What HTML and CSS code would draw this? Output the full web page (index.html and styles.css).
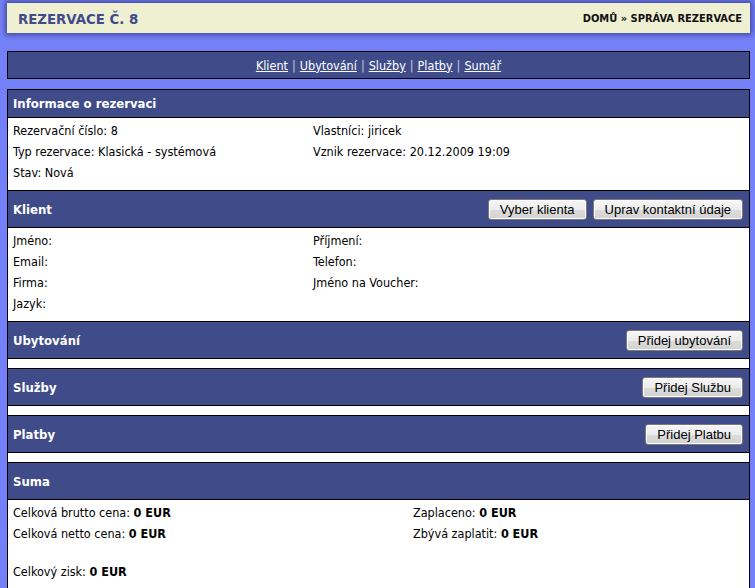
FILE: index.html
```html
<!DOCTYPE html>
<html lang="cs">
<head>
<meta charset="utf-8">
<title>Rezervace č. 8</title>
<link rel="stylesheet" href="styles.css">
</head>
<body>
<div class="page">
  <header class="top">
    <h1 class="top-title">REZERVACE Č. 8</h1>
    <div class="crumbs">DOMŮ » SPRÁVA REZERVACE</div>
  </header>

  <nav class="nav">
    <a href="#">Klient</a><span class="sep">|</span><a href="#">Ubytování</a><span class="sep">|</span><a href="#">Služby</a><span class="sep">|</span><a href="#">Platby</a><span class="sep">|</span><a href="#">Sumář</a>
  </nav>

  <main class="panel">
    <section class="sec">
      <div class="sec-head sec-head--thin">Informace o rezervaci</div>
      <div class="sec-body">
        <div class="grid grid--300">
          <div class="cell">Rezervační číslo: 8</div><div class="cell">Vlastníci: jiricek</div>
          <div class="cell">Typ rezervace: Klasická - systémová</div><div class="cell">Vznik rezervace: 20.12.2009 19:09</div>
          <div class="cell">Stav: Nová</div><div class="cell"></div>
        </div>
      </div>
    </section>

    <section class="sec">
      <div class="sec-head"><span>Klient</span>
        <div class="actions"><button class="btn">Vyber klienta</button><button class="btn">Uprav kontaktní údaje</button></div>
      </div>
      <div class="sec-body">
        <div class="grid grid--300">
          <div class="cell">Jméno:</div><div class="cell">Příjmení:</div>
          <div class="cell">Email:</div><div class="cell">Telefon:</div>
          <div class="cell">Firma:</div><div class="cell">Jméno na Voucher:</div>
          <div class="cell">Jazyk:</div><div class="cell"></div>
        </div>
      </div>
    </section>

    <section class="sec">
      <div class="sec-head"><span>Ubytování</span>
        <div class="actions"><button class="btn">Přidej ubytování</button></div>
      </div>
      <div class="sec-body sec-body--empty"></div>
    </section>

    <section class="sec">
      <div class="sec-head"><span>Služby</span>
        <div class="actions"><button class="btn">Přidej Službu</button></div>
      </div>
      <div class="sec-body sec-body--empty"></div>
    </section>

    <section class="sec">
      <div class="sec-head"><span>Platby</span>
        <div class="actions"><button class="btn">Přidej Platbu</button></div>
      </div>
      <div class="sec-body sec-body--empty"></div>
    </section>

    <section class="sec">
      <div class="sec-head"><span>Suma</span></div>
      <div class="sec-body sec-body--last">
        <div class="grid grid--400">
          <div class="cell">Celková brutto cena: <b>0 EUR</b></div><div class="cell">Zaplaceno: <b>0 EUR</b></div>
          <div class="cell">Celková netto cena: <b>0 EUR</b></div><div class="cell">Zbývá zaplatit: <b>0 EUR</b></div>
        </div>
        <div class="grid grid--400 grid--gap">
          <div class="cell">Celkový zisk: <b>0 EUR</b></div>
        </div>
      </div>
    </section>
  </main>
</div>
</body>
</html>
```

FILE: styles.css
```css
html, body {
  margin: 0;
  padding: 0;
}
body {
  background: #7480f7;
  font-family: "DejaVu Sans Condensed", "DejaVu Sans", sans-serif;
  font-size: 12.5px;
  color: #000;
  overflow: hidden;
}
.page {
  padding: 3px 5px 0 7px;
}
.top {
  height: 30px;
  background: #efefd2;
  box-shadow: 0 0 5px 2px #3e4a9a;
  display: flex;
  align-items: center;
  justify-content: space-between;
  padding: 0 8px 0 11px;
}
.top-title {
  margin: 0;
  font-size: 14.8px;
  font-weight: bold;
  color: #3f4b8c;
}
.crumbs {
  font-size: 11px;
  font-weight: bold;
  color: #111;
  padding-top: 1px;
}
.nav {
  margin-top: 18px;
  height: 26px;
  border: 1px solid #000;
  background: #404c8a;
  display: flex;
  align-items: center;
  justify-content: center;
  color: #ccd;
}
.nav a {
  color: #fff;
  text-decoration: underline;
}
.nav .sep {
  color: #c8c8d8;
  margin: 0 4px;
}
.panel {
  margin-top: 10px;
  border: 1px solid #000;
  border-bottom: none;
  background: #fff;
}
.sec + .sec .sec-head {
  border-top: 1px solid #000;
}
.sec-head {
  height: 36px;
  background: #404c8a;
  border-bottom: 1px solid #000;
  color: #fff;
  font-weight: bold;
  font-size: 13px;
  display: flex;
  align-items: center;
  justify-content: space-between;
  padding: 0 6px 0 5px;
}
.sec-head--thin {
  height: 27px;
}
.actions {
  display: flex;
  gap: 6px;
}
.btn {
  height: 21px;
  padding: 0 11px;
  font-family: "Liberation Sans", Arial, sans-serif;
  font-size: 13px;
  color: #000;
  border: 1px solid #7a7a7a;
  border-radius: 3px;
  background: linear-gradient(#f6f6f6 0%, #ececec 50%, #dcdcdc 51%, #d2d2d2 100%);
  box-shadow: inset 0 0 0 1px #fdfdfd;
  cursor: pointer;
}
.sec-body {
  padding: 2px 5px 7px;
}
.sec-body--empty {
  height: 0;
}
.sec-body--last {
  padding-bottom: 40px;
}
.grid {
  display: grid;
  grid-auto-rows: 21px;
  align-items: center;
}
.grid--300 {
  grid-template-columns: 300px 1fr;
}
.grid--400 {
  grid-template-columns: 400px 1fr;
}
.grid--gap {
  margin-top: 17px;
}
.cell {
  white-space: nowrap;
}
.cell b {
  font-weight: bold;
}
```
